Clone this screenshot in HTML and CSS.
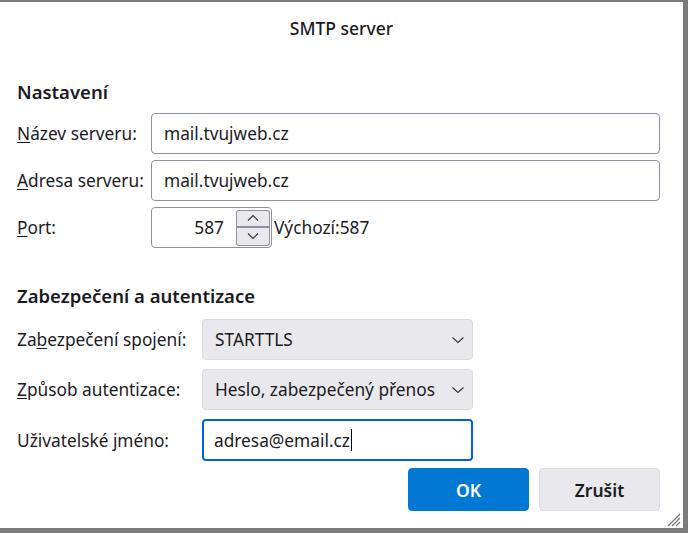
FILE: index.html
```html
<!DOCTYPE html>
<html lang="cs">
<head>
    <meta charset="UTF-8">
    <title>SMTP server</title>
    <link rel="stylesheet" href="styles.css">
</head>
<body>
    <div class="dialog">
        <div class="title">SMTP server</div>

        <h3 class="section-title">Nastavení</h3>
        <div class="form form-settings">
            <label><u>N</u>ázev serveru:</label>
            <div class="field">mail.tvujweb.cz</div>

            <label><u>A</u>dresa serveru:</label>
            <div class="field">mail.tvujweb.cz</div>

            <label><u>P</u>ort:</label>
            <div class="port-row">
                <div class="port">
                    <span class="port-value">587</span>
                    <div class="spinner">
                        <span class="spin">
                            <svg width="12" height="8" viewBox="0 0 12 8"><path d="M1 6.5 L6 1.5 L11 6.5" fill="none" stroke="#333" stroke-width="1.1"/></svg>
                        </span>
                        <span class="spin">
                            <svg width="12" height="8" viewBox="0 0 12 8"><path d="M1 1.5 L6 6.5 L11 1.5" fill="none" stroke="#333" stroke-width="1.1"/></svg>
                        </span>
                    </div>
                </div>
                <span class="default">Výchozí:587</span>
            </div>
        </div>

        <h3 class="section-title second">Zabezpečení a autentizace</h3>
        <div class="form form-security">
            <label>Za<u>b</u>ezpečení spojení:</label>
            <div class="select">
                <span>STARTTLS</span>
                <svg width="14" height="8" viewBox="0 0 14 8"><path d="M1.5 1.5 L7 6.5 L12.5 1.5" fill="none" stroke="#333" stroke-width="1.1"/></svg>
            </div>

            <label><u>Z</u>působ autentizace:</label>
            <div class="select">
                <span>Heslo, zabezpečený přenos</span>
                <svg width="14" height="8" viewBox="0 0 14 8"><path d="M1.5 1.5 L7 6.5 L12.5 1.5" fill="none" stroke="#333" stroke-width="1.1"/></svg>
            </div>

            <label>Uživatelské jméno:</label>
            <div class="field focused">adresa@email.cz<span class="caret"></span></div>
        </div>

        <div class="buttons">
            <button class="btn primary">OK</button>
            <button class="btn">Zrušit</button>
        </div>

        <svg class="grip" width="18" height="18" viewBox="0 0 18 18">
            <path d="M17 5 L5 17 M17 9 L9 17 M17 13 L13 17" stroke="#777" stroke-width="1.2"/>
        </svg>
    </div>
</body>
</html>
```

FILE: styles.css
```css
body {
    margin: 0;
    background: #7b7b7b;
    font-family: 'Noto Sans', 'Open Sans', sans-serif;
    color: #1b1b1f;
}
.dialog {
    position: relative;
    box-sizing: border-box;
    width: 683px;
    height: 526px;
    margin-top: 2px;
    background: #ffffff;
    padding: 0 0 0 17px;
}
.title {
    text-align: center;
    font-size: 17.5px;
    font-weight: 500;
    height: 52px;
    line-height: 52px;
    margin-left: -17px;
}
.section-title {
    margin: 0;
    font-size: 18.5px;
    font-weight: 600;
    line-height: 24px;
    padding-top: 26px;
    padding-bottom: 9px;
}
.section-title.second {
    padding-top: 36px;
    padding-bottom: 11px;
}
.form {
    display: grid;
    align-items: center;
    font-size: 17.3px;
}
.form-settings {
    grid-template-columns: 134px 509px;
    row-gap: 6px;
}
.form-security {
    grid-template-columns: 185px 271px;
    row-gap: 9px;
}
label u {
    text-decoration-thickness: 1px;
    text-underline-offset: 2px;
}
.field {
    box-sizing: border-box;
    height: 41px;
    border: 1px solid #8f8f9d;
    border-radius: 4px;
    padding: 0 12px;
    display: flex;
    align-items: center;
    background: #fff;
}
.field.focused {
    border: 2px solid #0061e0;
    padding: 0 10px;
    height: 42px;
}
.caret {
    display: inline-block;
    width: 1px;
    height: 22px;
    margin-left: 1px;
    background: #000;
}
.port-row {
    display: flex;
    align-items: center;
}
.port {
    box-sizing: border-box;
    width: 121px;
    height: 41px;
    border: 1px solid #8f8f9d;
    border-radius: 4px;
    display: flex;
    align-items: center;
    justify-content: flex-end;
    padding-right: 1px;
}
.port-value {
    margin-right: 12px;
}
.spinner {
    display: flex;
    flex-direction: column;
}
.spin {
    box-sizing: border-box;
    width: 34px;
    height: 18px;
    background: #e9e9ed;
    border: 1px solid #8f8f9d;
    display: flex;
    align-items: center;
    justify-content: center;
}
.spin:first-child {
    border-radius: 3px 3px 0 0;
    border-bottom-width: 2px;
}
.spin:last-child {
    border-top: none;
    border-radius: 0 0 3px 3px;
}
.default {
    margin-left: 2px;
}
.select {
    box-sizing: border-box;
    height: 41px;
    background: #e9e9ed;
    border: 1px solid #dcdce0;
    border-radius: 4px;
    padding: 0 7px 0 12px;
    display: flex;
    align-items: center;
    justify-content: space-between;
}
.buttons {
    display: flex;
    justify-content: flex-end;
    gap: 10px;
    margin-top: 7px;
    padding-right: 23px;
}
.btn {
    width: 121px;
    height: 43px;
    border: 1px solid #dcdce0;
    border-radius: 4px;
    background: #e9e9ed;
    font-family: inherit;
    font-size: 17.5px;
    font-weight: 600;
    color: #1b1b1f;
}
.btn.primary {
    background: #0078d4;
    border-color: #0078d4;
    color: #ffffff;
}
.grip {
    position: absolute;
    right: 2px;
    bottom: 1px;
}
```
